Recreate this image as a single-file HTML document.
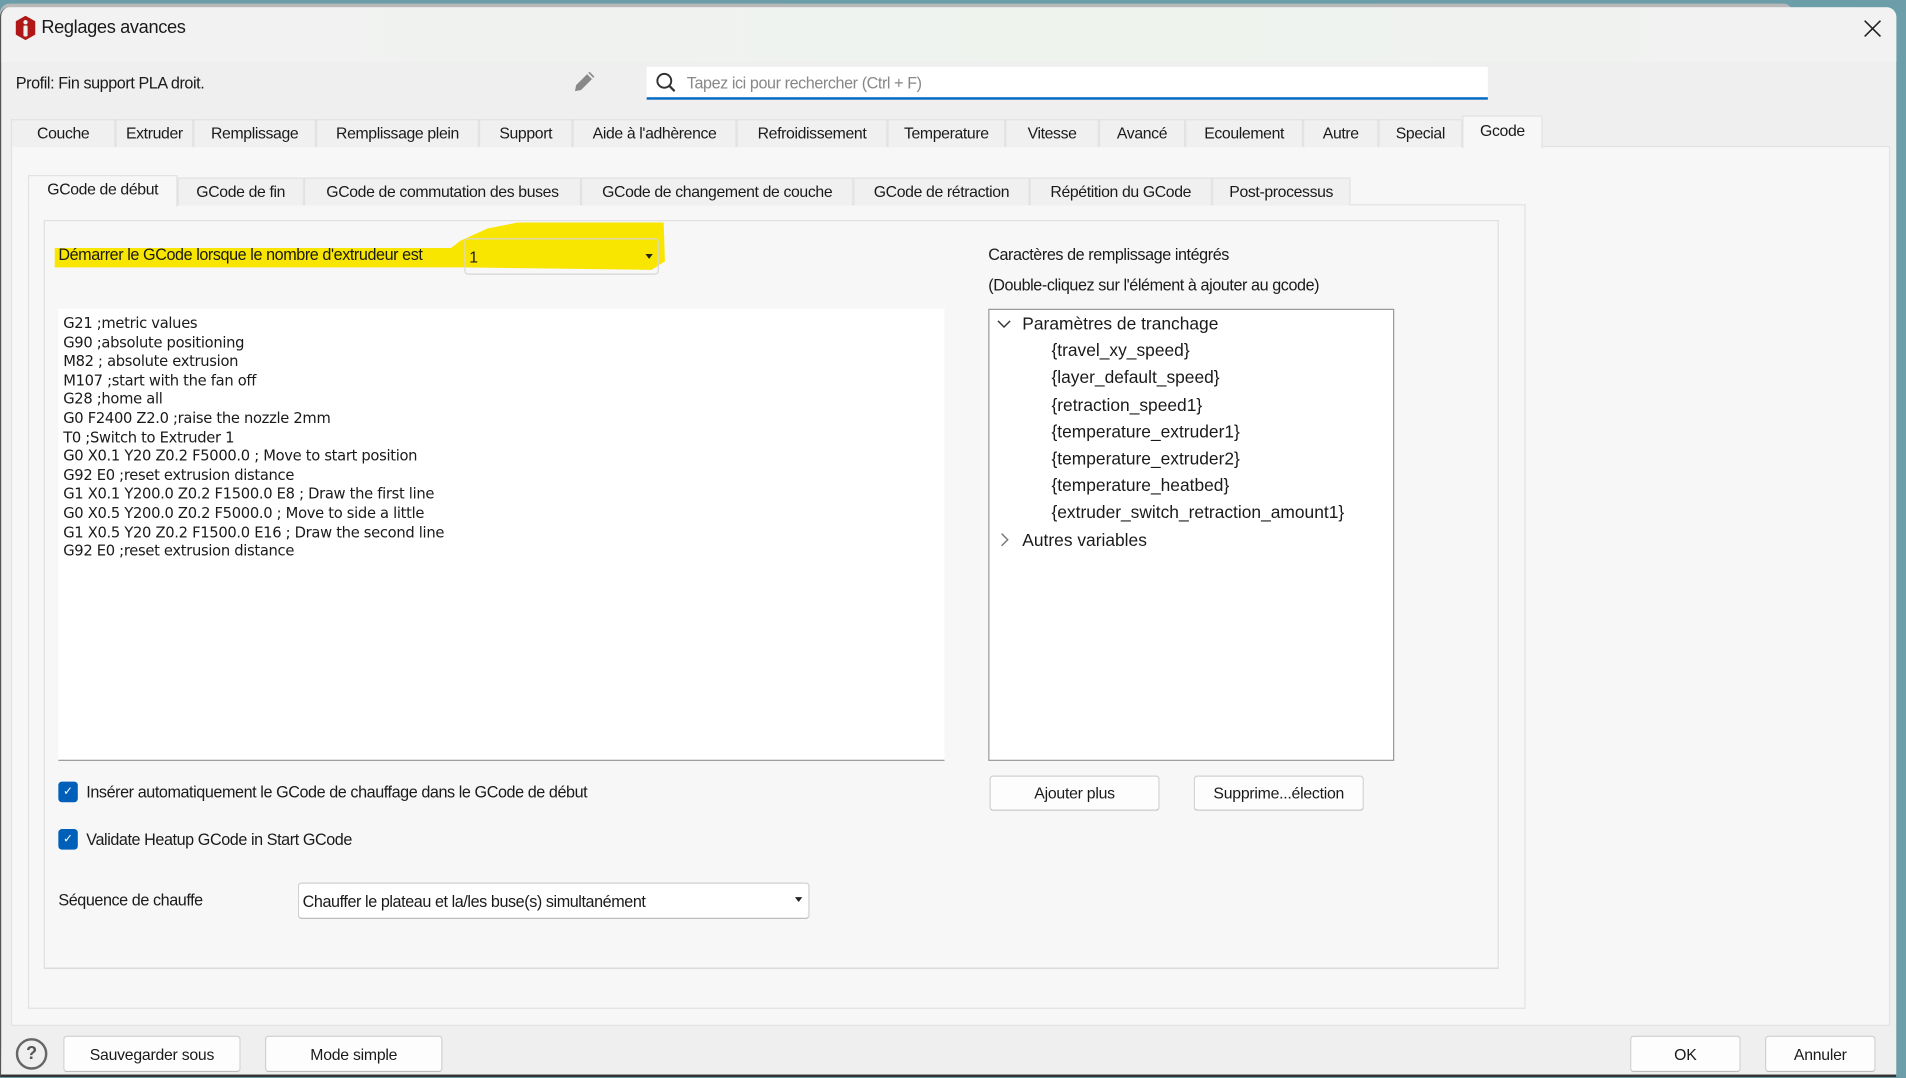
<!DOCTYPE html>
<html><head><meta charset="utf-8">
<style>
*{box-sizing:border-box;margin:0;padding:0}
html,body{width:1906px;height:1078px;overflow:hidden;background:#6b9ea8}
#s{position:absolute;left:0;top:0;width:1568px;height:887px;transform:scale(1.21556);transform-origin:0 0;font-family:"Liberation Sans",sans-serif;color:#1a1a1a;font-size:13px}
.a{position:absolute}
.win{left:0;top:6px;width:1560px;height:880px;background:#efefef;border-radius:8px 8px 0 0;border-left:1px solid #555;border-bottom:2px solid #333;overflow:hidden}
.title{left:0;top:0;width:1560px;height:45px;background:linear-gradient(90deg,#f2f2f2,#eef3ee 60%,#f2f2f2)}
.t{white-space:nowrap}
.tab{position:absolute;top:98px;height:23px;border:1px solid #e2e2e2;border-bottom:none;background:#f0f0f0;text-align:center;line-height:22px;font-size:13px;letter-spacing:-0.3px}
.stab{position:absolute;top:146px;height:23px;border:1px solid #e2e2e2;border-bottom:none;background:#f0f0f0;text-align:center;line-height:22px;font-size:13px;letter-spacing:-0.3px}
.btn{position:absolute;background:#fdfdfd;border:1px solid #d0d0d0;border-bottom-color:#bdbdbd;border-radius:3px;text-align:center;font-size:13px;letter-spacing:-0.2px}
.code{font-family:"DejaVu Sans","Liberation Sans",sans-serif;font-size:12.1px;line-height:15.6px;letter-spacing:-0.25px}
.tree{font-size:14.3px;line-height:22.2px}
.cb{position:absolute;width:16px;height:17px;background:#005fb8;border-radius:3px;color:#fff;font-size:10px;text-align:center;line-height:17px}
.l{font-size:13.3px;letter-spacing:-0.35px}
</style></head><body>
<div id="s">
<div class="a" style="left:0;top:3px;width:1475px;height:9px;background:#b8b8b8;border-radius:8px 8px 0 0"></div>
<div class="a win">
  <div class="a title"></div>
  <svg class="a" style="left:11px;top:7px" width="18" height="20" viewBox="0 0 18 20"><polygon points="9,0 17,4.5 17,15.5 9,20 1,15.5 1,4.5" fill="#b01818"/><rect x="7.3" y="8" width="3.4" height="9" rx="1" fill="#eee"/><circle cx="9" cy="5.3" r="1.8" fill="#eee"/></svg>
  <div class="a t" style="left:33px;top:8px;font-size:15px;letter-spacing:-0.3px">Reglages avances</div>
  <svg class="a" style="left:1532px;top:10px" width="15" height="15" viewBox="0 0 15 15"><path d="M1 1L14 14M14 1L1 14" stroke="#222" stroke-width="1.3"/></svg>
  <div class="a t l" style="left:12px;top:55px">Profil: Fin support PLA droit.</div>
  <svg class="a" style="left:469px;top:50px" width="22" height="22" viewBox="0 0 22 22"><path d="M15 3l4 4L8 18l-5 1 1-5z" fill="#888"/><path d="M13.5 4.5l4 4" stroke="#efefef" stroke-width="1.5"/></svg>
  <div class="a" style="left:531px;top:49px;width:692px;height:27px;background:#fff;border-bottom:2px solid #0067c0"></div>
  <svg class="a" style="left:538px;top:53px" width="18" height="18" viewBox="0 0 18 18"><circle cx="7.5" cy="7.5" r="5.7" stroke="#333" stroke-width="1.6" fill="none"/><path d="M11.5 11.5l4.5 4.5" stroke="#333" stroke-width="1.8"/></svg>
  <div class="a t l" style="left:564px;top:55px;color:#888">Tapez ici pour rechercher (Ctrl + F)</div>

  <div class="a" style="left:8px;top:114px;width:1546px;height:724px;background:#f7f7f7;border:1px solid #e2e2e2"></div>
  <div class="tab" style="left:8px;width:86px;top:92px">Couche</div>
  <div class="tab" style="left:94px;width:64px;top:92px">Extruder</div>
  <div class="tab" style="left:158px;width:101px;top:92px">Remplissage</div>
  <div class="tab" style="left:259px;width:134px;top:92px">Remplissage plein</div>
  <div class="tab" style="left:393px;width:77px;top:92px">Support</div>
  <div class="tab" style="left:470px;width:135px;top:92px">Aide à l'adhèrence</div>
  <div class="tab" style="left:605px;width:124px;top:92px">Refroidissement</div>
  <div class="tab" style="left:729px;width:97px;top:92px">Temperature</div>
  <div class="tab" style="left:826px;width:77px;top:92px">Vitesse</div>
  <div class="tab" style="left:903px;width:71px;top:92px">Avancé</div>
  <div class="tab" style="left:974px;width:97px;top:92px">Ecoulement</div>
  <div class="tab" style="left:1071px;width:62px;top:92px">Autre</div>
  <div class="tab" style="left:1133px;width:69px;top:92px">Special</div>
  <div class="tab" style="left:1202px;width:66px;top:89px;height:27px;background:#f7f7f7;line-height:24px">Gcode</div>

  <div class="a" style="left:22px;top:162px;width:1232px;height:662px;background:#f7f7f7;border:1px solid #e2e2e2"></div>
  <div class="stab" style="left:22px;width:123px;top:138px;height:26px;background:#f7f7f7">GCode de début</div>
  <div class="stab" style="left:145px;width:104px;top:140px">GCode de fin</div>
  <div class="stab" style="left:249px;width:228px;top:140px">GCode de commutation des buses</div>
  <div class="stab" style="left:477px;width:224px;top:140px">GCode de changement de couche</div>
  <div class="stab" style="left:701px;width:145px;top:140px">GCode de rétraction</div>
  <div class="stab" style="left:846px;width:150px;top:140px">Répétition du GCode</div>
  <div class="stab" style="left:996px;width:114px;top:140px">Post-processus</div>

  <div class="a" style="left:35px;top:175px;width:1197px;height:616px;border:1px solid #e0e0e0;border-bottom-color:#d6d6d6"></div>

  <svg class="a" style="left:40px;top:174px" width="510" height="46" viewBox="0 0 510 46"><path d="M4 24 L330 24 L338 18 L360 8 L385 3 L505 3 L506 35 L495 42 L340 40 L300 40 L4 40 Z" fill="#f9e600"/></svg>
  <div class="a t l" style="left:47px;top:196px">Démarrer le GCode lorsque le nombre d'extrudeur est</div>
  <div class="a" style="left:381px;top:190px;width:160px;height:30px;border:1px solid #d6d6d6;border-radius:3px"></div>
  <div class="a t" style="left:385px;top:198px;font-size:13px">1</div>
  <div class="a" style="left:530px;top:203px;border:3px solid transparent;border-top:4px solid #222"></div>

  <div class="a t l" style="left:812px;top:196px">Caractères de remplissage intégrés</div>
  <div class="a t l" style="left:812px;top:221px">(Double-cliquez sur l'élément à ajouter au gcode)</div>

  <div class="a code t" style="left:47px;top:248px;width:729px;height:372px;background:#fff;border-bottom:1px solid #999;padding:5px 0 0 4px">G21 ;metric values<br>G90 ;absolute positioning<br>M82 ; absolute extrusion<br>M107 ;start with the fan off<br>G28 ;home all<br>G0 F2400 Z2.0 ;raise the nozzle 2mm<br>T0 ;Switch to Extruder 1<br>G0 X0.1 Y20 Z0.2 F5000.0 ; Move to start position<br>G92 E0 ;reset extrusion distance<br>G1 X0.1 Y200.0 Z0.2 F1500.0 E8 ; Draw the first line<br>G0 X0.5 Y200.0 Z0.2 F5000.0 ; Move to side a little<br>G1 X0.5 Y20 Z0.2 F1500.0 E16 ; Draw the second line<br>G92 E0 ;reset extrusion distance</div>

  <div class="a tree t" style="left:812px;top:248px;width:334px;height:372px;background:#fff;border:1px solid #999;padding:1px 0 0 27px">
    Paramètres de tranchage<br>
    <div style="padding-left:24px">{travel_xy_speed}<br>{layer_default_speed}<br>{retraction_speed1}<br>{temperature_extruder1}<br>{temperature_extruder2}<br>{temperature_heatbed}<br>{extruder_switch_retraction_amount1}</div>
    Autres variables
  </div>
  <svg class="a" style="left:819px;top:256px" width="12" height="10" viewBox="0 0 12 10"><path d="M1 2l5 5 5-5" stroke="#333" stroke-width="1.2" fill="none"/></svg>
  <svg class="a" style="left:820px;top:432px" width="10" height="12" viewBox="0 0 10 12"><path d="M3 1l5 5-5 5" stroke="#777" stroke-width="1.2" fill="none"/></svg>

  <div class="btn" style="left:813px;top:632px;width:140px;height:29px;line-height:28px">Ajouter plus</div>
  <div class="btn" style="left:981px;top:632px;width:140px;height:29px;line-height:28px">Supprime...élection</div>

  <div class="cb" style="left:47px;top:637px">✓</div>
  <div class="a t l" style="left:70px;top:638px">Insérer automatiquement le GCode de chauffage dans le GCode de début</div>
  <div class="cb" style="left:47px;top:676px">✓</div>
  <div class="a t l" style="left:70px;top:677px">Validate Heatup GCode in Start GCode</div>

  <div class="a t l" style="left:47px;top:727px">Séquence de chauffe</div>
  <div class="a" style="left:244px;top:720px;width:421px;height:30px;background:#fff;border:1px solid #d0d0d0;border-bottom-color:#bbb;border-radius:3px"></div>
  <div class="a t l" style="left:248px;top:728px">Chauffer le plateau et la/les buse(s) simultanément</div>
  <div class="a" style="left:653px;top:732px;border:3px solid transparent;border-top:4px solid #222"></div>

  <div class="a" style="left:12px;top:848px;width:26px;height:26px;border:2.5px solid #666;border-radius:50%;text-align:center;line-height:21px;font-size:15px;font-weight:bold;color:#555">?</div>
  <div class="btn" style="left:51px;top:846px;width:146px;height:30px;line-height:29px">Sauvegarder sous</div>
  <div class="btn" style="left:217px;top:846px;width:146px;height:30px;line-height:29px">Mode simple</div>
  <div class="btn" style="left:1340px;top:846px;width:91px;height:30px;line-height:29px">OK</div>
  <div class="btn" style="left:1451px;top:846px;width:91px;height:30px;line-height:29px">Annuler</div>
</div>
</div>
</body></html>
